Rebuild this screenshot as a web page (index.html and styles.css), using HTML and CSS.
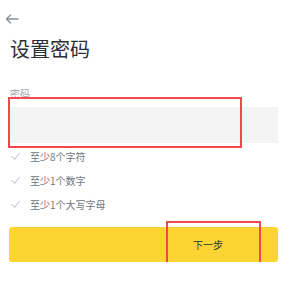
FILE: index.html
```html
<!DOCTYPE html>
<html lang="zh">
<head>
<meta charset="utf-8">
<link rel="stylesheet" href="styles.css">
</head>
<body>
<div class="page">
  <div class="back">
    <svg width="14" height="10" viewBox="0 0 14 10"><path d="M13 5H1.5M5.5 1L1.5 5l4 4" fill="none" stroke="#8a8f99" stroke-width="1.3" stroke-linecap="round" stroke-linejoin="round"/></svg>
  </div>
  <h1 class="title">设置密码</h1>
  <div class="label">密码</div>
  <div class="input"></div>
  <ul class="rules">
    <li><span class="check"></span>至少8个字符</li>
    <li><span class="check"></span>至少1个数字</li>
    <li><span class="check"></span>至少1个大写字母</li>
  </ul>
  <div class="btn">下一步</div>
  <div class="mark mark-input"></div>
  <div class="mark mark-btn"></div>
</div>
</body>
</html>
```
FILE: styles.css
```css
html, body {
  margin: 0;
  padding: 0;
  background: #fff;
}
body {
  font-family: "Noto Sans CJK SC", "Noto Sans", sans-serif;
  color: #333;
}
.page {
  position: relative;
  padding: 0 3px 0 9px;
}
.back {
  height: 10px;
  padding-top: 14px;
  margin-left: -4px;
  display: flex;
}
.title {
  margin: 11px 0 0 1px;
  font-size: 20px;
  line-height: 28px;
  font-weight: 400;
  color: #2b2f36;
  letter-spacing: 0;
}
.label {
  margin: 24px 0 0 1px;
  font-size: 10px;
  line-height: 14px;
  color: #a0a4ab;
}
.input {
  margin-top: 6px;
  height: 36px;
  background: #f3f3f3;
}
.rules {
  list-style: none;
  margin: 1px 0 0 0;
  padding: 0;
}
.rules li {
  height: 24px;
  display: flex;
  align-items: center;
  font-size: 10px;
  color: #70757d;
}
.check {
  width: 4px;
  height: 7px;
  border-right: 1px solid #c5c8cc;
  border-bottom: 1px solid #c5c8cc;
  transform: rotate(40deg);
  margin: -3px 12px 0 4px;
}
.btn {
  margin-top: 11px;
  height: 35px;
  border-radius: 3px;
  background: #fcd535;
  display: flex;
  align-items: center;
  justify-content: center;
  padding-left: 129px;
  font-size: 10px;
  color: #2b2f36;
}
.mark {
  position: absolute;
  border: 2px solid #f5474d;
  box-sizing: border-box;
}
.mark-input {
  left: 8px;
  top: 97px;
  width: 234px;
  height: 51px;
}
.mark-btn {
  left: 166px;
  top: 221px;
  width: 95px;
  height: 47px;
}
```
